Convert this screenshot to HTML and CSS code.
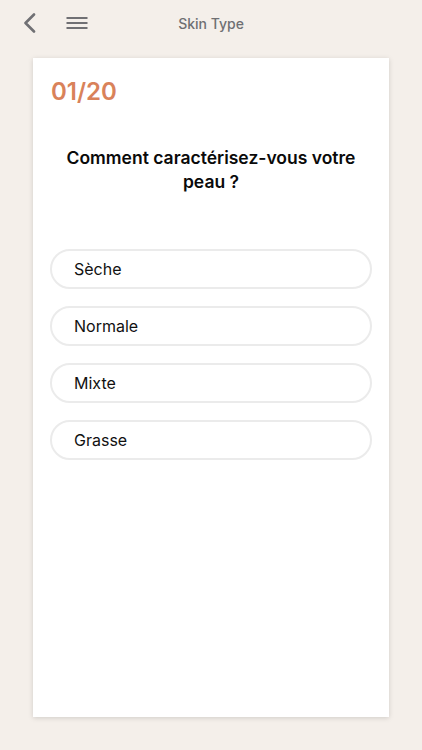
FILE: index.html
```html
<!DOCTYPE html>
<html lang="fr">

<head>
    <meta charset="UTF-8">
    <meta name="viewport" content="width=device-width, initial-scale=1.0">
    <title>Skin Type</title>
    <link rel="stylesheet" href="styles.css">
</head>

<body>
    <header class="top-bar">
        <button class="icon-btn back-btn" aria-label="Retour">
            <svg width="16" height="20" viewBox="0 0 16 20">
                <path d="M12 1.5 L3.5 10 L12 18.5" fill="none" stroke="#707074" stroke-width="2.6" stroke-linecap="round" stroke-linejoin="round"/>
            </svg>
        </button>
        <button class="icon-btn menu-btn" aria-label="Menu">
            <svg width="22" height="14" viewBox="0 0 22 14">
                <rect x="0.5" y="1" width="21" height="2" fill="#707074"/>
                <rect x="0.5" y="6" width="21" height="2" fill="#707074"/>
                <rect x="0.5" y="11" width="21" height="2" fill="#707074"/>
            </svg>
        </button>
        <h1 class="title">Skin Type</h1>
    </header>

    <main class="quiz-card">
        <div class="step">01/20</div>
        <h2 class="question">Comment caractérisez-vous votre peau ?</h2>
        <ul class="choices">
            <li><button class="choice">Sèche</button></li>
            <li><button class="choice">Normale</button></li>
            <li><button class="choice">Mixte</button></li>
            <li><button class="choice">Grasse</button></li>
        </ul>
    </main>
</body>

</html>
```

FILE: styles.css
```css
body {
    font-family: Inter, "Liberation Sans", Arial, sans-serif;
    background-color: #f4efea;
    margin: 0;
    padding: 0;
    height: 750px;
    overflow: hidden;
}

.top-bar {
    position: relative;
    display: flex;
    align-items: center;
    height: 46px;
    padding: 0 0 0 22px;
}

.icon-btn {
    background: none;
    border: none;
    padding: 0;
    display: flex;
    align-items: center;
    cursor: pointer;
}

.back-btn {
    margin-right: 28px;
}

.title {
    position: absolute;
    left: 0;
    right: 0;
    top: 0;
    margin: 0;
    line-height: 47px;
    text-align: center;
    font-size: 14px;
    font-weight: 500;
    color: #6f6f73;
    pointer-events: none;
}

.quiz-card {
    background: white;
    margin: 12px 33px 0;
    height: 659px;
    padding: 20px 17px 0;
    box-sizing: border-box;
    box-shadow: 0 1px 5px rgba(0, 0, 0, 0.15);
}

.step {
    font-size: 24px;
    font-weight: 600;
    color: #d9825a;
    line-height: 28px;
    padding-left: 1px;
}

.question {
    margin: 40px 6px 0;
    font-size: 17.5px;
    font-weight: 600;
    line-height: 24px;
    text-align: center;
    color: #0a0a0a;
}

.choices {
    list-style: none;
    margin: 55px 0 0;
    padding: 0;
    display: flex;
    flex-direction: column;
    gap: 17px;
}

.choice {
    width: 100%;
    height: 40px;
    padding: 0 0 0 22px;
    background: white;
    border: 2px solid #ebebeb;
    border-radius: 20px;
    font-family: Inter, "Liberation Sans", Arial, sans-serif;
    font-size: 16px;
    color: #111;
    text-align: left;
    cursor: pointer;
}
```
